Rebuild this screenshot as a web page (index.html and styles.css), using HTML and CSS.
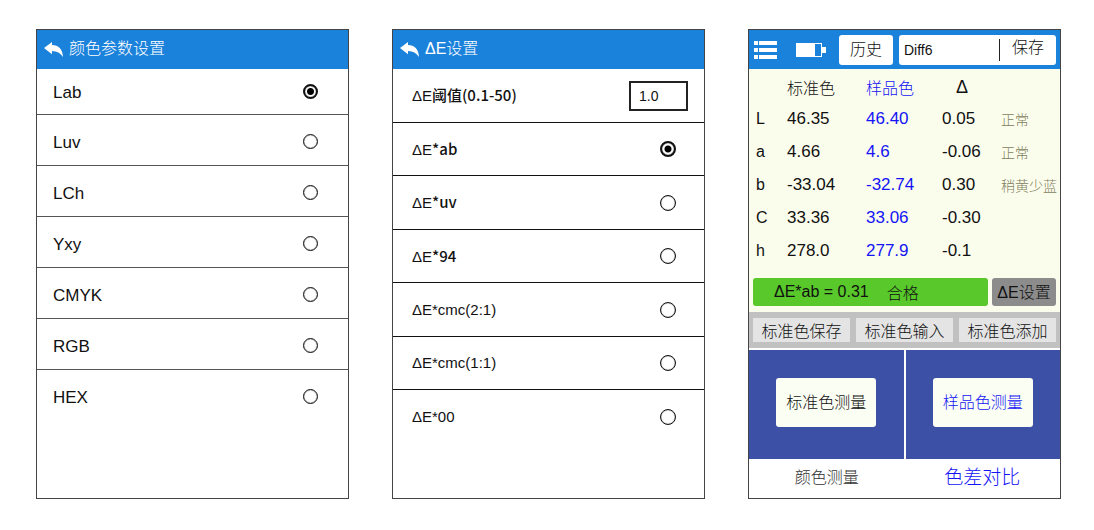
FILE: index.html
```html
<!DOCTYPE html>
<html lang="zh-CN">
<head>
<meta charset="utf-8">
<title>颜色测量</title>
<link rel="stylesheet" href="styles.css">
</head>
<body>
<main class="screens">

  <section class="screen">
    <header class="bar">
      <button class="back" type="button" aria-label="返回"><svg width="20" height="16" viewBox="0 0 20 16"><path d="M0 6 8 0V3C14.500 3.200 18.600 7 19 15 16.500 11 13 9 8 9V12.300Z" fill="#fff"/></svg></button>
      <h1 class="title">颜色参数设置</h1>
    </header>
    <div class="options params">
      <label class="option"><span class="name">Lab</span><input class="radio" type="radio" name="param" checked></label>
      <label class="option"><span class="name">Luv</span><input class="radio" type="radio" name="param"></label>
      <label class="option"><span class="name">LCh</span><input class="radio" type="radio" name="param"></label>
      <label class="option"><span class="name">Yxy</span><input class="radio" type="radio" name="param"></label>
      <label class="option"><span class="name">CMYK</span><input class="radio" type="radio" name="param"></label>
      <label class="option"><span class="name">RGB</span><input class="radio" type="radio" name="param"></label>
      <label class="option"><span class="name">HEX</span><input class="radio" type="radio" name="param"></label>
    </div>
  </section>

  <section class="screen">
    <header class="bar">
      <button class="back" type="button" aria-label="返回"><svg width="20" height="16" viewBox="0 0 20 16"><path d="M0 6 8 0V3C14.500 3.200 18.600 7 19 15 16.500 11 13 9 8 9V12.300Z" fill="#fff"/></svg></button>
      <h1 class="title">ΔE设置</h1>
    </header>
    <div class="options deltas">
      <label class="option threshold"><span class="name">ΔE<span class="strong">阈值(0.1-50)</span></span><input class="limit" type="text" value="1.0"></label>
      <label class="option"><span class="name">ΔE<span class="strong">*ab</span></span><input class="radio" type="radio" name="delta" checked></label>
      <label class="option"><span class="name">ΔE<span class="strong">*uv</span></span><input class="radio" type="radio" name="delta"></label>
      <label class="option"><span class="name">ΔE<span class="strong">*94</span></span><input class="radio" type="radio" name="delta"></label>
      <label class="option"><span class="name">ΔE*cmc(2:1)</span><input class="radio" type="radio" name="delta"></label>
      <label class="option"><span class="name">ΔE*cmc(1:1)</span><input class="radio" type="radio" name="delta"></label>
      <label class="option"><span class="name">ΔE*00</span><input class="radio" type="radio" name="delta"></label>
    </div>
  </section>

  <section class="screen">
    <header class="bar tools">
      <button class="menu" type="button" aria-label="菜单"><svg width="23" height="18" viewBox="0 0 23 18" fill="#fff"><path d="M0 0h4v4H0zM5 0h18v4H5zM0 7h4v4H0zM5 7h18v4H5zM0 14h4v4H0zM5 14h18v4H5z"/></svg></button>
      <svg class="battery" width="30" height="14" viewBox="0 0 30 14"><path fill="#fff" fill-rule="evenodd" d="M0 0h26v4h4v6h-4v4H0zM19 1v12h6V1z"/></svg>
      <button class="history" type="button">历史</button>
      <div class="save-box">
        <input class="record" type="text" value="Diff6" aria-label="名称">
        <button class="save" type="button">保存</button>
      </div>
    </header>

    <div class="results">
      <table class="values">
        <colgroup><col class="c-key"><col class="c-std"><col class="c-smp"><col class="c-diff"><col></colgroup>
        <thead>
          <tr><td></td><th>标准色</th><th class="sample">样品色</th><th class="diff">Δ</th><td></td></tr>
        </thead>
        <tbody>
          <tr><th>L</th><td>46.35</td><td class="sample">46.40</td><td>0.05</td><td class="note">正常</td></tr>
          <tr><th>a</th><td>4.66</td><td class="sample">4.6</td><td>-0.06</td><td class="note">正常</td></tr>
          <tr><th>b</th><td>-33.04</td><td class="sample">-32.74</td><td>0.30</td><td class="note">稍黄少蓝</td></tr>
          <tr><th>C</th><td>33.36</td><td class="sample">33.06</td><td>-0.30</td><td class="note"></td></tr>
          <tr><th>h</th><td>278.0</td><td class="sample">277.9</td><td>-0.1</td><td class="note"></td></tr>
        </tbody>
      </table>
      <div class="verdict-row">
        <p class="verdict"><span>ΔE*ab = 0.31</span><span>合格</span></p>
        <button class="delta-settings" type="button">ΔE设置</button>
      </div>
    </div>

    <div class="standard-actions">
      <button class="std" type="button">标准色保存</button>
      <button class="std" type="button">标准色输入</button>
      <button class="std" type="button">标准色添加</button>
    </div>

    <div class="measure">
      <div class="pane"><button class="measure-btn" type="button">标准色测量</button></div>
      <div class="pane"><button class="measure-btn sample" type="button">样品色测量</button></div>
    </div>

    <nav class="tabs">
      <button class="tab" type="button">颜色测量</button>
      <button class="tab current" type="button">色差对比</button>
    </nav>
  </section>

</main>
</body>
</html>
```
FILE: styles.css
```css
* {
  box-sizing: border-box;
}

body {
  margin: 0;
  background: #fff;
  color: #111;
  font-family: "Liberation Sans", "Noto Sans CJK SC", sans-serif;
  font-size: 16px;
}

button,
input {
  margin: 0;
  padding: 0;
  border: 0;
  background: none;
  color: inherit;
  font: inherit;
}

button {
  font-weight: 300;
  white-space: nowrap;
}

.screens {
  display: grid;
  grid-template-columns: repeat(3, minmax(0, 1fr));
  gap: 43px;
  padding: 29px 33px 31px 36px;
}

.screen {
  display: flex;
  flex-direction: column;
  border: 1px solid #444;
}

.bar {
  display: flex;
  align-items: center;
  height: 39px;
  padding: 0 7px;
  background: #1b82dc;
  color: #fff;
}

.back {
  display: flex;
}

.title {
  margin: 0 0 0 5px;
  padding-bottom: 2px;
  font-size: 16px;
  font-weight: 300;
  line-height: 20px;
}

/* Option lists */

.option {
  display: flex;
  align-items: center;
  justify-content: space-between;
}

.option:not(:last-child) {
  border-bottom: 1px solid #555;
}

.params .option {
  height: 51px;
  padding: 2px 30px 0 16px;
  font-size: 17px;
}

.params .option:first-child {
  height: 46px;
  padding-top: 0;
}

.params .name {
  padding-top: 3px;
}

.deltas .option {
  height: 54px;
  padding: 0 28px 0 19px;
  border-color: #111;
  font-size: 15px;
}

.deltas .option:nth-child(even) {
  height: 53px;
}

.deltas .threshold {
  padding-right: 16px;
}

.name {
  line-height: 20px;
}

.strong {
  font-family: "Noto Sans CJK SC", sans-serif;
  font-weight: 500;
}

.radio {
  appearance: none;
  width: 15px;
  height: 15px;
  border: 1px solid #111;
  border-radius: 50%;
  box-shadow: inset 0 0 1px #111;
}

.radio:checked {
  border: 2px solid #111;
  background: radial-gradient(circle, #000 3px, transparent 4px);
}

.deltas .radio {
  width: 16px;
  height: 16px;
}

.limit {
  width: 59px;
  height: 30px;
  padding-left: 8px;
  border: 2px solid #222;
  font-size: 14px;
}

/* Colour difference screen */

.tools {
  padding: 0 4px 0 5px;
}

.menu,
.battery {
  display: flex;
  flex: none;
}

.battery {
  margin-left: 19px;
}

.history {
  flex: none;
  width: 54px;
  height: 30px;
  margin-left: 13px;
  padding-bottom: 3px;
  border-radius: 3px;
  background: #fff;
  color: #111;
}

.save-box {
  display: flex;
  align-items: center;
  flex: 1;
  min-width: 0;
  height: 30px;
  margin-left: 6px;
  border-radius: 3px;
  background: #fff;
  color: #111;
}

.record {
  flex: 1;
  min-width: 0;
  padding-left: 5px;
  font-size: 14px;
}

.save {
  height: 22px;
  padding: 0 12px 3px;
  border-left: 1px solid #222;
  line-height: 18px;
}

.results {
  padding: 3px 4px 6px;
  background: #fbfdec;
}

.values {
  width: 100%;
  table-layout: fixed;
  border-collapse: collapse;
  font-size: 17px;
}

.c-key {
  width: 34px;
}

.c-std {
  width: 79px;
}

.c-smp {
  width: 76px;
}

.c-diff {
  width: 59px;
}

.values th,
.values td {
  height: 33px;
  padding: 0;
  text-align: left;
  white-space: nowrap;
}

.values thead th,
.values thead td {
  height: 30px;
}

.values th {
  font-size: 16px;
  font-weight: 300;
}

.values tbody th {
  padding-left: 3px;
  font-weight: 400;
}

.values .diff {
  padding-left: 14px;
  font-size: 18px;
  font-weight: 400;
}

.values .note {
  color: #817d5c;
  font-size: 14px;
  font-weight: 300;
}

.sample {
  color: #1414f5;
}

.verdict-row {
  display: flex;
  gap: 4px;
  margin-top: 11px;
}

.verdict {
  display: flex;
  align-items: center;
  flex: 1;
  gap: 18px;
  height: 28px;
  margin: 0;
  padding-left: 21px;
  border-radius: 3px;
  background: #58c82b;
  font-weight: 300;
}

.delta-settings {
  width: 64px;
  padding-bottom: 2px;
  border-radius: 3px;
  background: #8c8c8c;
}

.standard-actions {
  display: grid;
  grid-template-columns: repeat(3, 1fr);
  gap: 6px;
  padding: 6px 4px;
  background: #c1c1c1;
}

.std {
  height: 24px;
  padding-bottom: 2px;
  background: #e4e4e4;
}

.measure {
  display: grid;
  grid-template-columns: 1fr 1fr;
  gap: 2px;
  padding-top: 2px;
}

.pane {
  padding: 28px 0 32px;
  background: #3c50a6;
  text-align: center;
}

.measure-btn {
  width: 100px;
  height: 49px;
  padding-bottom: 3px;
  border-radius: 3px;
  background: #fbfef3;
  vertical-align: top;
}

.tabs {
  display: grid;
  grid-template-columns: 1fr 1fr;
  height: 39px;
}

.tab {
  padding-bottom: 6px;
  color: #333;
}

.tab.current {
  color: #1414f5;
  font-size: 19px;
}
```
